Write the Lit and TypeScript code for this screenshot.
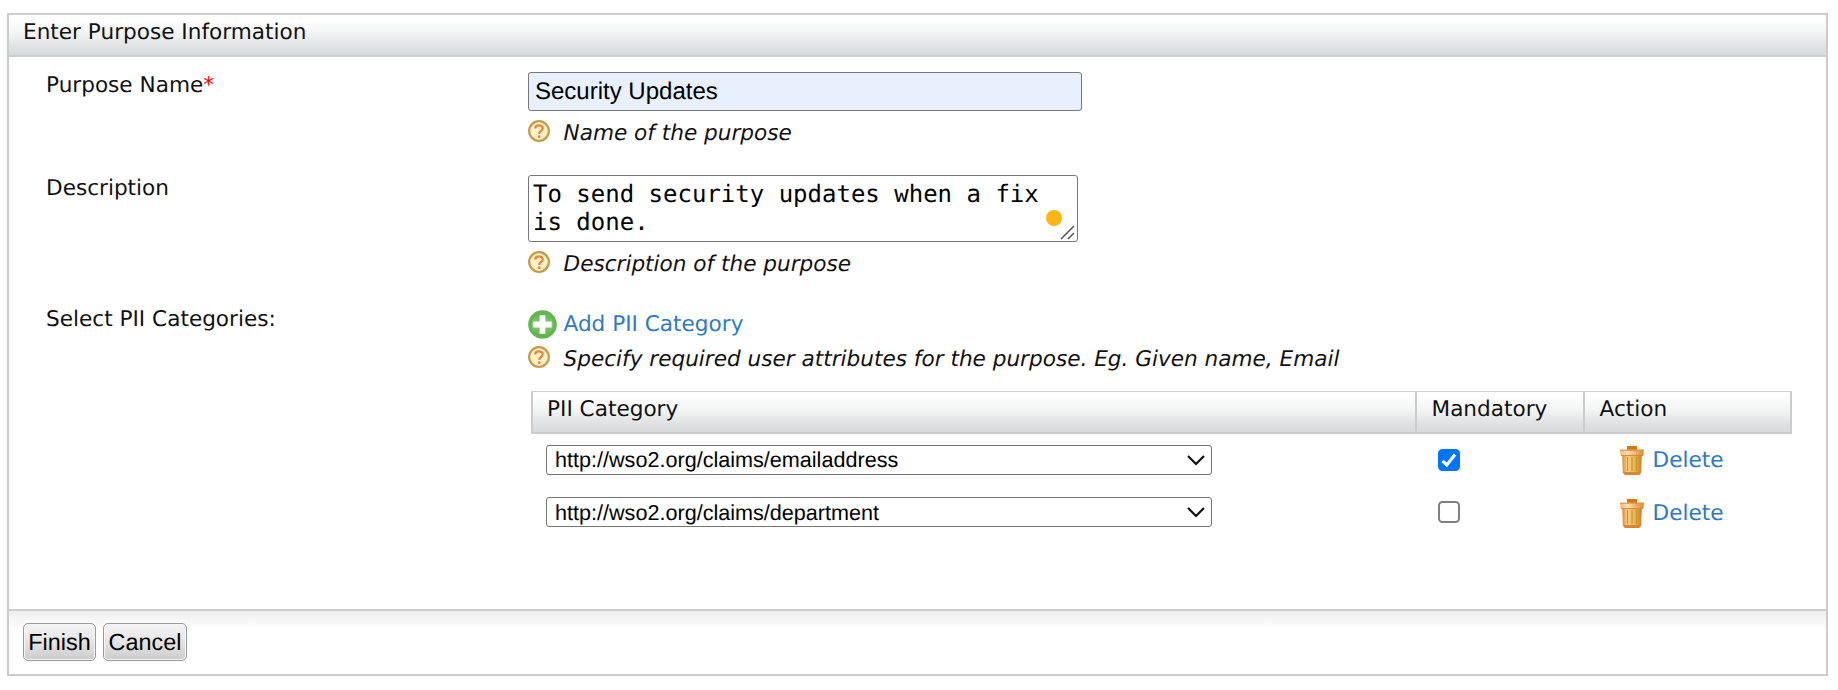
import { LitElement, html, css } from "lit";
import { customElement, state } from "lit/decorators.js";

const helpIcon = html`<svg class="help" viewBox="0 0 22 22">
  <circle cx="11" cy="11" r="9.8" fill="#fdf1cc" stroke="#c29c48" stroke-width="2.3"/>
  <circle cx="11" cy="11" r="8.100" fill="none" stroke="#f8ebc4" stroke-width="1"/>
  <path d="M7.200 8.500C7.200 4.500 14.900 4.400 14.700 8.500C14.500 11 11.200 10.900 11.200 13.900" fill="none" stroke="#e8893a" stroke-width="2.300"/>
  <circle cx="11.200" cy="16.700" r="1.450" fill="#e8893a"/>
</svg>`;

const addIcon = html`<svg class="add" viewBox="0 0 29 29">
  <defs><linearGradient id="ag" x1="0" y1="0" x2="0" y2="1"><stop offset="0" stop-color="#5db548"/><stop offset=".5" stop-color="#84c974"/><stop offset="1" stop-color="#5fb44b"/></linearGradient></defs>
  <circle cx="14.5" cy="14.5" r="14.3" fill="#62b64e"/>
  <circle cx="14.5" cy="14.5" r="11" fill="url(#ag)"/>
  <path d="M11.600 5.300h5.800v6.300h6.300v5.800h-6.300v6.300h-5.800v-6.300H5.300v-5.800h6.300z" fill="#fff"/>
</svg>`;

const trashIcon = html`<svg class="trash" viewBox="0 0 24 29">
  <defs>
    <linearGradient id="tb"><stop offset="0" stop-color="#d98a2c"/><stop offset=".25" stop-color="#f6d18d"/><stop offset=".6" stop-color="#e8bb52"/><stop offset="1" stop-color="#d07d26"/></linearGradient>
    <linearGradient id="tl"><stop offset="0" stop-color="#f0b780"/><stop offset=".3" stop-color="#fbdcb8"/><stop offset="1" stop-color="#e08a2e"/></linearGradient>
  </defs>
  <path d="M7 0h10v4H7z" fill="#d2780f"/>
  <path d="M2.200 9h19.600l-.6 17.500L19 29H5L2.800 26.500z" fill="url(#tb)"/>
  <path d="M2.800 26h18.400L19 29H5z" fill="#d88535"/>
  <path d="M7.500 11v14M12 11v14M16.500 11v14" stroke="#d6922f" stroke-width="1.200"/>
  <path d="M.3 3.700h23.400v5.500H.3z" fill="url(#tl)"/>
  <path d="M0 4.200h24M1 9.500h22" stroke="#dd8a35" stroke-width="1"/>
</svg>`;

@customElement("app-root")
export class AppRoot extends LitElement {
  @state() rows = [
    { category: "http://wso2.org/claims/emailaddress", mandatory: true },
    { category: "http://wso2.org/claims/department", mandatory: false },
  ];

  static styles = css`
    :host { display: block; height: 690px; padding: 13px 10px 14px 7px; box-sizing: border-box; background: #fff;
      font: 21.6px/28px "DejaVu Sans", sans-serif; color: #111; overflow: hidden; text-rendering: geometricPrecision; }
    * { box-sizing: border-box; }
    input, select, textarea, button { text-rendering: geometricPrecision; }
    .panel { height: 663px; border: 2px solid #ccc; display: flex; flex-direction: column; }
    .head { height: 42px; border-bottom: 2px solid #ccc; padding: 4px 14px; }
    .head, th { background: linear-gradient(#fff 10%, #f3f4f4 45%, #e0e1e2 80%, #d8d9da); }
    .form { flex: 1; display: grid; grid-template-columns: 482px 1fr; grid-template-rows: 103px 131px 1fr; padding: 15px 34px 0 37px; }
    .req { color: #f00; }
    .name { display: block; width: 554px; height: 39px; border: 1px solid #767676; border-radius: 3px; background: #e8f0fe; padding: 1px 6px 0;
      font: 24px "Liberation Sans", sans-serif; color: #000; }
    .area { position: relative; width: 550px; }
    textarea { display: block; width: 550px; height: 67px; border: 1px solid #767676; border-radius: 3px; padding: 4px; resize: none; overflow: hidden;
      font: 24px/28px "DejaVu Sans Mono", monospace; color: #000; margin: 0; }
    .dot { position: absolute; right: 16px; bottom: 16px; width: 16px; height: 16px; border-radius: 50%; background: #fdb515; }
    .grip { position: absolute; right: 3px; bottom: 2px; width: 15px; height: 15px; fill: none; stroke: #555; stroke-width: 1.500; }
    .hint { display: flex; align-items: flex-start; gap: 13.500px; margin-top: 9px; height: 26px; font-style: italic; white-space: nowrap; }
    svg { display: block; flex: none; }
    .help { width: 22px; height: 22px; }
    .add { width: 29px; height: 29px; }
    .trash { width: 24px; height: 29px; }
    a { color: #2f7abf; text-decoration: none; }
    .addrow { display: flex; gap: 6.500px; height: 29px; margin-top: 4px; }
    .addrow a { padding-top: 1px; }
    .addrow + .hint { margin-top: 7px; }
    table { margin: 19px 0 0 3px; width: 1261px; border-collapse: separate; border-spacing: 0; table-layout: fixed; }
    th { height: 43px; text-align: left; vertical-align: top; font-weight: normal; padding: 4px 14.500px; border: solid #ccc; border-width: 1px 0 2px 2px; }
    th:first-child { padding-left: 14px; }
    th:last-child { border-right-width: 2px; }
    td { height: 52px; padding: 0; vertical-align: middle; }
    .c1 { width: 884px; } .c2 { width: 168px; }
    select { appearance: none; display: block; width: 666px; height: 30px; margin-left: 15px; border: 1px solid #767676; border-radius: 3px; background: #fff; padding: 0 8px;
      font: 21.6px "Liberation Sans", sans-serif; color: #000; }
    tr:first-child select { padding-bottom: 2px; }
    .sel { position: relative; }
    .chev { position: absolute; left: 656px; top: 9px; width: 18px; height: 12px; fill: none; stroke: #111; stroke-width: 2.200; }
    .check { appearance: none; display: block; width: 22px; height: 22px; margin: 0 0 0 23px; border: 2px solid #808080; border-radius: 4.500px; background: #fff; }
    .box { position: relative; }
    .box .check:checked { background: #0075ff; border-color: #0075ff; }
    .tick { position: absolute; left: 25px; top: 2px; width: 18px; height: 18px; fill: none; stroke: #fff; stroke-width: 3.200; }
    .del { display: flex; gap: 8.500px; height: 29px; margin-left: 37px; }
    .del a { padding-top: 1px; }
    tr:last-child .del { margin-top: 2px; }
    .foot { height: 65px; border-top: 2px solid #ccc; background: linear-gradient(#eee, #fff 18px); padding: 12px 14px; display: flex; gap: 7px; }
    button { height: 38px; padding: 0; border: 1px solid #999; border-radius: 5px; box-shadow: inset 0 0 0 1px #f6f6f6;
      background: linear-gradient(#f4f4f4, #e4e4e4 50%, #ccc); font: 23.4px "Liberation Sans", sans-serif; color: #000; }
    .finish { width: 73px; } .cancel { width: 84px; }
  `;

  private hint(text: string) {
    return html`<div class="hint">${helpIcon}<span>${text}</span></div>`;
  }

  render() {
    return html`<div class="panel">
      <div class="head">Enter Purpose Information</div>
      <div class="form">
        <div>Purpose Name<span class="req">*</span></div>
        <div><input class="name" .value=${"Security Updates"} />${this.hint("Name of the purpose")}</div>
        <div>Description</div>
        <div>
          <div class="area">
            <textarea .value=${"To send security updates when a fix is done."}></textarea>
            <i class="dot"></i>
            <svg class="grip" viewBox="0 0 15 15"><path d="M1 14L14 1M8 14L14 8" /></svg>
          </div>
          ${this.hint("Description of the purpose")}
        </div>
        <div>Select PII Categories:</div>
        <div>
          <div class="addrow">${addIcon}<a>Add PII Category</a></div>
          ${this.hint("Specify required user attributes for the purpose. Eg. Given name, Email")}
          <table>
            <thead><tr><th class="c1">PII Category</th><th class="c2">Mandatory</th><th>Action</th></tr></thead>
            <tbody>
              ${this.rows.map((r) => html`<tr>
                <td><div class="sel"><select><option>${r.category}</option></select>
                  <svg class="chev" viewBox="0 0 18 12"><path d="M1 2L9 10L17 2" /></svg></div></td>
                <td><div class="box"><input class="check" type="checkbox" .checked=${r.mandatory} />
                  ${r.mandatory ? html`<svg class="tick" viewBox="0 0 18 18"><path d="M2.500 10L6.800 14L15 3.500" /></svg>` : ""}</div></td>
                <td><div class="del">${trashIcon}<a>Delete</a></div></td>
              </tr>`)}
            </tbody>
          </table>
        </div>
      </div>
      <div class="foot"><button class="finish">Finish</button><button class="cancel">Cancel</button></div>
    </div>`;
  }
}
